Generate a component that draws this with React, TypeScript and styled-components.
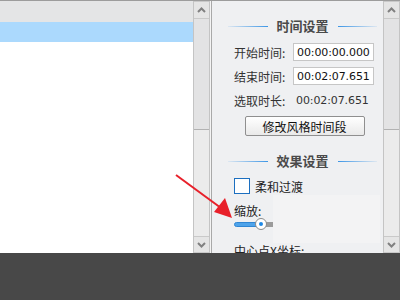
import React from 'react';
import styled, { createGlobalStyle } from 'styled-components';

const GlobalStyle = createGlobalStyle`
  html, body {
    margin: 0;
    padding: 0;
    background: #484848;
  }
  body {
    font-family: "Noto Sans CJK SC", "DejaVu Sans", sans-serif;
  }
`;

const Screen = styled.div`
  position: relative;
  width: 400px;
  height: 300px;
  overflow: hidden;
  display: flex;
  flex-direction: column;
  background: #484848;
`;

const Workspace = styled.div`
  display: flex;
  height: 253px;
  border-top: 1px solid #9c9c9c;
  box-sizing: border-box;
  background: #ffffff;
`;

const ListPane = styled.div`
  width: 193px;
  display: flex;
  flex-direction: column;
  background: #ffffff;
`;

const ListHeader = styled.div`
  height: 21px;
  background: #e4e5e6;
`;

const ListRow = styled.div<{ $selected?: boolean }>`
  height: 20px;
  background: ${(p) => (p.$selected ? '#abd9fd' : '#ffffff')};
`;

const ScrollTrack = styled.div`
  width: 17px;
  display: flex;
  flex-direction: column;
  background: #eaeaea;
  border-left: 1px solid #c4c4c4;
  border-right: 1px solid #c4c4c4;
  box-sizing: border-box;
`;

const ScrollButton = styled.div<{ $h: number }>`
  height: ${(p) => p.$h}px;
  display: flex;
  align-items: center;
  justify-content: center;
  background: #e5e5e5;
  box-sizing: border-box;
  border-top: 1px solid #c9c9c9;
  border-bottom: 1px solid #c9c9c9;
`;

const ScrollThumb = styled.div`
  height: 111px;
  background: #e3e3e4;
  border-bottom: 1px solid #b2b2b2;
  box-sizing: border-box;
`;

const ScrollRest = styled.div`
  flex: 1;
  background: #ebebeb;
`;

const Divider = styled.div`
  width: 2px;
  background: linear-gradient(to right, #f4f4f4 0 1px, #a9a9a9 1px 2px);
`;

const Panel = styled.div`
  position: relative;
  width: 171px;
  overflow: hidden;
  background: #eff0f2;
  display: flex;
  flex-direction: column;
  padding: 0 6px 0 16px;
  box-sizing: border-box;
  color: #222;
  font-size: 12px;
`;

const Heading = styled.div<{ $top: number }>`
  display: flex;
  align-items: center;
  gap: 9px;
  height: 14px;
  flex-shrink: 0;
  margin-top: ${(p) => p.$top}px;
  font-size: 13px;
  font-weight: bold;
  color: #4a4a4a;
  line-height: 14px;

  &::before,
  &::after {
    content: '';
    flex: 1;
    height: 1px;
  }
  &::before {
    background: linear-gradient(to right, rgba(60, 150, 230, 0.1), #3d96e6);
  }
  &::after {
    background: linear-gradient(to right, #3d96e6, rgba(60, 150, 230, 0.1));
  }
`;

const Field = styled.div<{ $top?: number }>`
  display: flex;
  align-items: center;
  justify-content: space-between;
  height: 24px;
  flex-shrink: 0;
  margin-top: ${(p) => p.$top ?? 0}px;
  padding: 0 3px 0 6px;
`;

const Label = styled.span`
  font-size: 12px;
  color: #333;
  white-space: nowrap;
`;

const TimeBox = styled.div`
  width: 81px;
  height: 18px;
  box-sizing: border-box;
  background: #ffffff;
  border: 1px solid #c6c6c6;
  display: flex;
  align-items: center;
  padding-left: 3px;
  font-family: "DejaVu Sans", sans-serif;
  font-size: 11px;
  letter-spacing: -0.1px;
  color: #111;
`;

const TimeText = styled.span`
  width: 78px;
  padding-left: 3px;
  font-family: "DejaVu Sans", sans-serif;
  font-size: 11px;
  letter-spacing: -0.1px;
  color: #333;
`;

const ActionButton = styled.button`
  align-self: center;
  flex-shrink: 0;
  margin: 4px 0 0 4px;
  width: 120px;
  height: 20px;
  padding: 0;
  border: 1px solid #8f8f8f;
  border-radius: 2px;
  background: linear-gradient(to bottom, #ffffff, #e9e9e9);
  font-family: "Noto Sans CJK SC", sans-serif;
  font-size: 12px;
  color: #111;
`;

const CheckRow = styled.label`
  display: flex;
  align-items: center;
  gap: 5px;
  height: 16px;
  flex-shrink: 0;
  margin-top: 10px;
  padding-left: 6px;
  font-size: 12px;
  color: #222;
`;

const CheckBox = styled.span`
  width: 16px;
  height: 16px;
  box-sizing: border-box;
  border: 1px solid #1c6fc0;
  background: #ffffff;
`;

const TextLine = styled.div<{ $top: number }>`
  height: 14px;
  line-height: 14px;
  flex-shrink: 0;
  margin-top: ${(p) => p.$top}px;
  padding-left: 6px;
  font-size: 12px;
  color: #222;
  white-space: nowrap;
`;

const Slider = styled.div`
  position: relative;
  display: flex;
  align-items: center;
  height: 12px;
  flex-shrink: 0;
  margin-top: 0;
  margin-left: 6px;
  width: 40px;
`;

const SliderFill = styled.div`
  width: 26px;
  height: 5px;
  border-radius: 3px 0 0 3px;
  background: #4ea3ea;
  border: 1px solid #2f86d4;
  box-sizing: border-box;
`;

const SliderRest = styled.div`
  flex: 1;
  height: 5px;
  background: #9b9b9b;
`;

const SliderKnob = styled.div`
  position: absolute;
  left: 21px;
  top: 0;
  width: 12px;
  height: 12px;
  box-sizing: border-box;
  border-radius: 50%;
  border: 1px solid #8a8a8a;
  background: #ffffff;
  display: flex;
  align-items: center;
  justify-content: center;

  &::after {
    content: '';
    width: 4px;
    height: 4px;
    border-radius: 50%;
    background: #1e88e5;
  }
`;

const BlankPatch = styled.div`
  position: absolute;
  left: 61px;
  top: 194px;
  width: 107px;
  height: 48px;
  background: #f3f3f4;
`;

const Footer = styled.div`
  flex: 1;
  background: #484848;
`;

const Arrow = styled.svg`
  position: absolute;
  left: 0;
  top: 0;
  pointer-events: none;
`;

const Chevron = ({ up }: { up?: boolean }) => (
  <svg width="9" height="6" viewBox="0 0 9 6">
    <polyline
      points={up ? '1,5 4.5,1.5 8,5' : '1,1 4.5,4.5 8,1'}
      fill="none"
      stroke="#808080"
      strokeWidth="2"
    />
  </svg>
);

const Scrollbar = () => (
  <ScrollTrack>
    <ScrollButton $h={18}>
      <Chevron up />
    </ScrollButton>
    <ScrollThumb />
    <ScrollRest />
    <ScrollButton $h={17}>
      <Chevron />
    </ScrollButton>
  </ScrollTrack>
);

export default function App() {
  return (
    <>
      <GlobalStyle />
      <Screen>
        <Workspace>
          <ListPane>
            <ListHeader />
            <ListRow $selected />
          </ListPane>
          <Scrollbar />
          <Divider />
          <Panel>
            <Heading $top={18}>时间设置</Heading>
            <Field $top={7}>
              <Label>开始时间:</Label>
              <TimeBox>00:00:00.000</TimeBox>
            </Field>
            <Field>
              <Label>结束时间:</Label>
              <TimeBox>00:02:07.651</TimeBox>
            </Field>
            <Field>
              <Label>选取时长:</Label>
              <TimeText>00:02:07.651</TimeText>
            </Field>
            <ActionButton>修改风格时间段</ActionButton>
            <Heading $top={18}>效果设置</Heading>
            <CheckRow>
              <CheckBox />
              柔和过渡
            </CheckRow>
            <TextLine $top={10}>缩放:</TextLine>
            <Slider>
              <SliderFill />
              <SliderRest />
              <SliderKnob />
            </Slider>
            <TextLine $top={14}>中心点X坐标:</TextLine>
            <BlankPatch />
          </Panel>
          <Scrollbar />
        </Workspace>
        <Footer />
        <Arrow width="400" height="300">
          <line x1="176" y1="175" x2="221" y2="208" stroke="#e8202a" strokeWidth="2" />
          <polygon points="232,218 214,212 225,198" fill="#e8202a" />
        </Arrow>
      </Screen>
    </>
  );
}
